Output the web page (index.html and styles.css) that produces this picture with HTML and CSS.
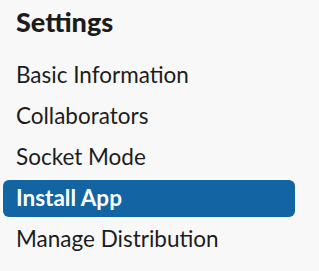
FILE: index.html
```html
<!DOCTYPE html>
<html lang="en">
<head>
  <meta charset="UTF-8" />
  <title>Settings</title>
  <link rel="stylesheet" href="styles.css">
</head>
<body>
  <nav class="sidebar">
    <h2 class="sidebar-title">Settings</h2>
    <ul class="nav-list">
      <li><a href="#" class="nav-item">Basic Information</a></li>
      <li><a href="#" class="nav-item">Collaborators</a></li>
      <li><a href="#" class="nav-item">Socket Mode</a></li>
      <li><a href="#" class="nav-item active">Install App</a></li>
      <li><a href="#" class="nav-item">Manage Distribution</a></li>
    </ul>
  </nav>
</body>
</html>
```

FILE: styles.css
```css
body {
  margin: 0;
  background: #f8f8f8;
  font-family: Lato, "Noto Sans", sans-serif;
  color: #1d1c1d;
}

.sidebar {
  width: 292px;
  padding: 6px 0 0 3px;
}

.sidebar-title {
  margin: 0 0 19px;
  padding-left: 13px;
  font-size: 27px;
  font-weight: 900;
  line-height: 32px;
}

.nav-list {
  list-style: none;
  margin: 0;
  padding: 0;
  display: flex;
  flex-direction: column;
  gap: 4px;
}

.nav-item {
  display: block;
  padding: 0 13px;
  height: 37px;
  line-height: 36px;
  font-size: 22.5px;
  color: #1d1c1d;
  text-decoration: none;
  border-radius: 6px;
}

.nav-item.active {
  background: #1264a3;
  color: #fff;
  font-weight: 700;
}
```
